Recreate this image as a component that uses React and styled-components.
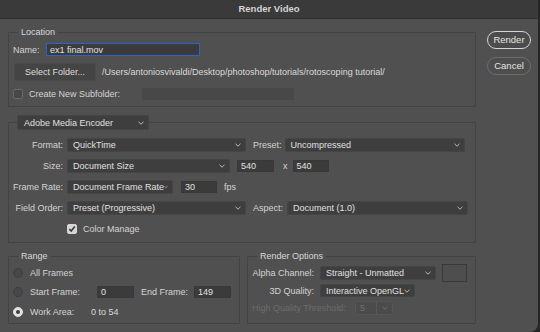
import React from 'react';
import styled, { createGlobalStyle } from 'styled-components';

const GlobalStyle = createGlobalStyle`
  html, body {
    margin: 0;
    padding: 0;
    background: #262626;
  }
  body {
    font-family: "Liberation Sans", Arial, sans-serif;
    font-size: 9px;
    line-height: 12px;
    color: #d6d6d6;
  }
  * {
    box-sizing: border-box;
  }
`;

const BG = '#505050';

const Window = styled.div`
  width: 538px;
  height: 332px;
  background: ${BG};
  border-bottom-right-radius: 8px;
  overflow: hidden;
  display: flex;
  flex-direction: column;
`;

const TitleBar = styled.div`
  height: 19px;
  flex: none;
  background: #3a3a3a;
  border-bottom: 1px solid #2e2e2e;
  display: flex;
  align-items: center;
  justify-content: center;
  font-size: 9.5px;
  font-weight: bold;
  color: #d4d4d4;
`;

const Body = styled.div`
  display: flex;
  flex: 1;
`;

const Main = styled.div`
  width: 476px;
  flex: none;
  padding: 13px 0 0 8px;
  display: flex;
  flex-direction: column;
`;

const Side = styled.div`
  padding: 12px 0 0 11px;
  display: flex;
  flex-direction: column;
  gap: 8px;
`;

const Panel = styled.section`
  margin-top: ${(p) => p.$mt || 0}px;
  padding: 0 4px;
  border: 1px solid #434343;
  border-radius: 1px;
  display: flex;
  flex-direction: column;
  flex: ${(p) => (p.$grow ? '1 1 0' : 'none')};
  width: ${(p) => (p.$w ? `${p.$w}px` : 'auto')};
`;

const Legend = styled.div`
  align-self: flex-start;
  margin: -7px 0 0 5px;
  padding: 0 3px;
  height: 12px;
  line-height: 12px;
  background: ${BG};
  color: #d8d8d8;
`;

const SelectLegend = styled.div`
  align-self: flex-start;
  margin: -8px 0 0 4px;
`;

const Stack = styled.div`
  display: flex;
  flex-direction: column;
  gap: ${(p) => p.$gap}px;
  padding: ${(p) => p.$pt}px 0 ${(p) => p.$pb}px;
`;

const Row = styled.div`
  display: flex;
  align-items: center;
  height: ${(p) => p.$h}px;
  margin-top: ${(p) => p.$mt || 0}px;
`;

const PanelRow = styled.div`
  display: flex;
  gap: 7px;
  margin-top: 13px;
`;

const Label = styled.span`
  flex: none;
  width: ${(p) => (p.$w ? `${p.$w}px` : 'auto')};
  text-align: ${(p) => (p.$right ? 'right' : 'left')};
  margin-left: ${(p) => p.$ml || 0}px;
  color: ${(p) => (p.$dim ? '#6c6c6c' : '#d4d4d4')};
  white-space: nowrap;
`;

const Text = styled.span`
  margin-left: ${(p) => p.$ml || 0}px;
  color: #dadada;
  white-space: nowrap;
`;

const SelectBox = styled.div`
  flex: none;
  display: flex;
  align-items: center;
  justify-content: space-between;
  width: ${(p) => p.$w}px;
  height: ${(p) => p.$h || 14}px;
  margin-left: ${(p) => p.$ml || 0}px;
  padding: 0 ${(p) => (p.$split ? 0 : 4)}px 0 ${(p) => p.$pl || 5}px;
  background: ${(p) => (p.$off ? '#4b4b4b' : '#3e3e3e')};
  border: 1px solid ${(p) => (p.$off ? '#565656' : '#454545')};
  border-radius: 2px;
  color: ${(p) => (p.$off ? '#6e6e6e' : '#e0e0e0')};
  white-space: nowrap;
`;

const SplitPart = styled.span`
  display: flex;
  align-items: center;
  height: 100%;
  padding: 0 4px 0 5px;
  border-left: 1px solid #585858;
`;

const Field = styled.div`
  flex: none;
  width: ${(p) => p.$w}px;
  height: ${(p) => p.$h || 12}px;
  margin-left: ${(p) => p.$ml || 0}px;
  padding-left: 3px;
  display: flex;
  align-items: center;
  background: ${(p) => (p.$off ? '#484848' : '#3b3b3b')};
  border: 1px solid ${(p) => (p.$focus ? '#2d63c8' : p.$off ? '#484848' : '#383838')};
  color: #e2e2e2;
  white-space: nowrap;
`;

const Check = styled.span`
  flex: none;
  width: 10px;
  height: 10px;
  margin-left: ${(p) => p.$ml || 0}px;
  border-radius: 2px;
  border: 1px solid ${(p) => (p.$on ? '#d6d6d6' : '#6a6a6a')};
  background: ${(p) => (p.$on ? '#d6d6d6' : '#474747')};
  display: flex;
  align-items: center;
  justify-content: center;
`;

const Radio = styled.span`
  flex: none;
  width: 10px;
  height: 10px;
  border-radius: 50%;
  border: 1px solid ${(p) => (p.$on ? '#e2e2e2' : '#3f3f3f')};
  background: ${(p) => (p.$on ? '#e2e2e2' : '#474747')};
  display: flex;
  align-items: center;
  justify-content: center;

  &::after {
    content: '';
    display: ${(p) => (p.$on ? 'block' : 'none')};
    width: 4px;
    height: 4px;
    border-radius: 50%;
    background: #3c3c3c;
  }
`;

const FolderButton = styled.div`
  flex: none;
  width: 82px;
  height: 18px;
  margin-left: 1px;
  display: flex;
  align-items: center;
  justify-content: center;
  background: #444444;
  border: 1px solid #4a4a4a;
  border-radius: 2px;
  color: #dcdcdc;
`;

const PillButton = styled.div`
  width: 44px;
  height: 18px;
  display: flex;
  align-items: center;
  justify-content: center;
  border-radius: 9px;
  border: 1px solid ${(p) => (p.$primary ? '#d4d4d4' : '#6c6c6c')};
  background: ${(p) => (p.$primary ? '#4c4c4c' : '#4e4e4e')};
  color: #e4e4e4;
  font-size: 9.5px;
`;

const Swatch = styled.div`
  flex: none;
  width: 25px;
  height: 18px;
  margin-left: 6px;
  border: 1px solid #393939;
  background: #4e4e4e;
`;

const Chevron = ({ dim }) => (
  <svg width="6" height="4" viewBox="0 0 6 4">
    <polyline points="0.5,0.8 3,3.2 5.5,0.8" fill="none" stroke={dim ? '#6e6e6e' : '#b8b8b8'} strokeWidth="1" />
  </svg>
);

const Tick = () => (
  <svg width="8" height="8" viewBox="0 0 8 8">
    <polyline points="1.3,4.2 3.2,6 6.8,1.6" fill="none" stroke="#3a3a3a" strokeWidth="1.6" />
  </svg>
);

const Select = ({ children, ...rest }) => (
  <SelectBox {...rest}>
    <span>{children}</span>
    <Chevron />
  </SelectBox>
);

export default function App() {
  return (
    <>
      <GlobalStyle />
      <Window>
        <TitleBar>Render Video</TitleBar>
        <Body>
          <Main>
            <Panel>
              <Legend>Location</Legend>
              <Stack $gap={7} $pt={5} $pb={6}>
                <Row $h={13}>
                  <Label $w={33}>Name:</Label>
                  <Field $w={154} $h={13} $focus>ex1 final.mov</Field>
                </Row>
                <Row $h={18}>
                  <FolderButton>Select Folder...</FolderButton>
                  <Text $ml={6}>/Users/antoniosvivaldi/Desktop/photoshop/tutorials/rotoscoping tutorial/</Text>
                </Row>
                <Row $h={12}>
                  <Check />
                  <Label $ml={6}>Create New Subfolder:</Label>
                  <Field $w={152} $ml={22} $off />
                </Row>
              </Stack>
            </Panel>

            <Panel $mt={15}>
              <SelectLegend>
                <Select $w={132} $h={15} $pl={6}>Adobe Media Encoder</Select>
              </SelectLegend>
              <Stack $gap={7} $pt={8} $pb={6}>
                <Row $h={14}>
                  <Label $w={50} $right>Format:</Label>
                  <Select $w={179} $ml={4}>QuickTime</Select>
                  <Label $ml={7}>Preset:</Label>
                  <Select $w={180} $ml={3}>Uncompressed</Select>
                </Row>
                <Row $h={14}>
                  <Label $w={50} $right>Size:</Label>
                  <Select $w={163} $ml={4}>Document Size</Select>
                  <Field $w={37} $ml={7}>540</Field>
                  <Label $ml={9}>x</Label>
                  <Field $w={36} $ml={5}>540</Field>
                </Row>
                <Row $h={14}>
                  <Label $w={50} $right>Frame Rate:</Label>
                  <Select $w={106} $ml={4}>Document Frame Rate</Select>
                  <Field $w={36} $ml={8}>30</Field>
                  <Label $ml={7}>fps</Label>
                </Row>
                <Row $h={14}>
                  <Label $w={50} $right>Field Order:</Label>
                  <Select $w={179} $ml={4}>Preset (Progressive)</Select>
                  <Label $ml={7}>Aspect:</Label>
                  <Select $w={181} $ml={4}>Document (1.0)</Select>
                </Row>
                <Row $h={14}>
                  <Check $on $ml={54}>
                    <Tick />
                  </Check>
                  <Label $ml={6}>Color Manage</Label>
                </Row>
              </Stack>
            </Panel>

            <PanelRow>
              <Panel $w={232}>
                <Legend>Range</Legend>
                <Stack $gap={6.5} $pt={4} $pb={5}>
                  <Row $h={13}>
                    <Radio />
                    <Label $ml={7}>All Frames</Label>
                  </Row>
                  <Row $h={13}>
                    <Radio />
                    <Label $ml={7} $w={67}>Start Frame:</Label>
                    <Field $w={37}>0</Field>
                    <Label $ml={7} $w={53}>End Frame:</Label>
                    <Field $w={37}>149</Field>
                  </Row>
                  <Row $h={13}>
                    <Radio $on />
                    <Label $ml={7} $w={61}>Work Area:</Label>
                    <Text>0 to 54</Text>
                  </Row>
                </Stack>
              </Panel>

              <Panel $grow>
                <Legend>Render Options</Legend>
                <Stack $gap={2} $pt={2} $pb={5}>
                  <Row $h={18}>
                    <Label $w={62} $right>Alpha Channel:</Label>
                    <Select $w={116} $ml={6}>Straight - Unmatted</Select>
                    <Swatch />
                  </Row>
                  <Row $h={13}>
                    <Label $w={62} $right>3D Quality:</Label>
                    <Select $w={95} $h={13} $ml={6}>Interactive OpenGL</Select>
                  </Row>
                  <Row $h={14} $mt={2}>
                    <Label $dim>High Quality Threshold:</Label>
                    <SelectBox $w={38} $ml={9} $off $pl={4} $split>
                      <span>5</span>
                      <SplitPart>
                        <Chevron dim />
                      </SplitPart>
                    </SelectBox>
                  </Row>
                </Stack>
              </Panel>
            </PanelRow>
          </Main>

          <Side>
            <PillButton $primary>Render</PillButton>
            <PillButton>Cancel</PillButton>
          </Side>
        </Body>
      </Window>
    </>
  );
}
